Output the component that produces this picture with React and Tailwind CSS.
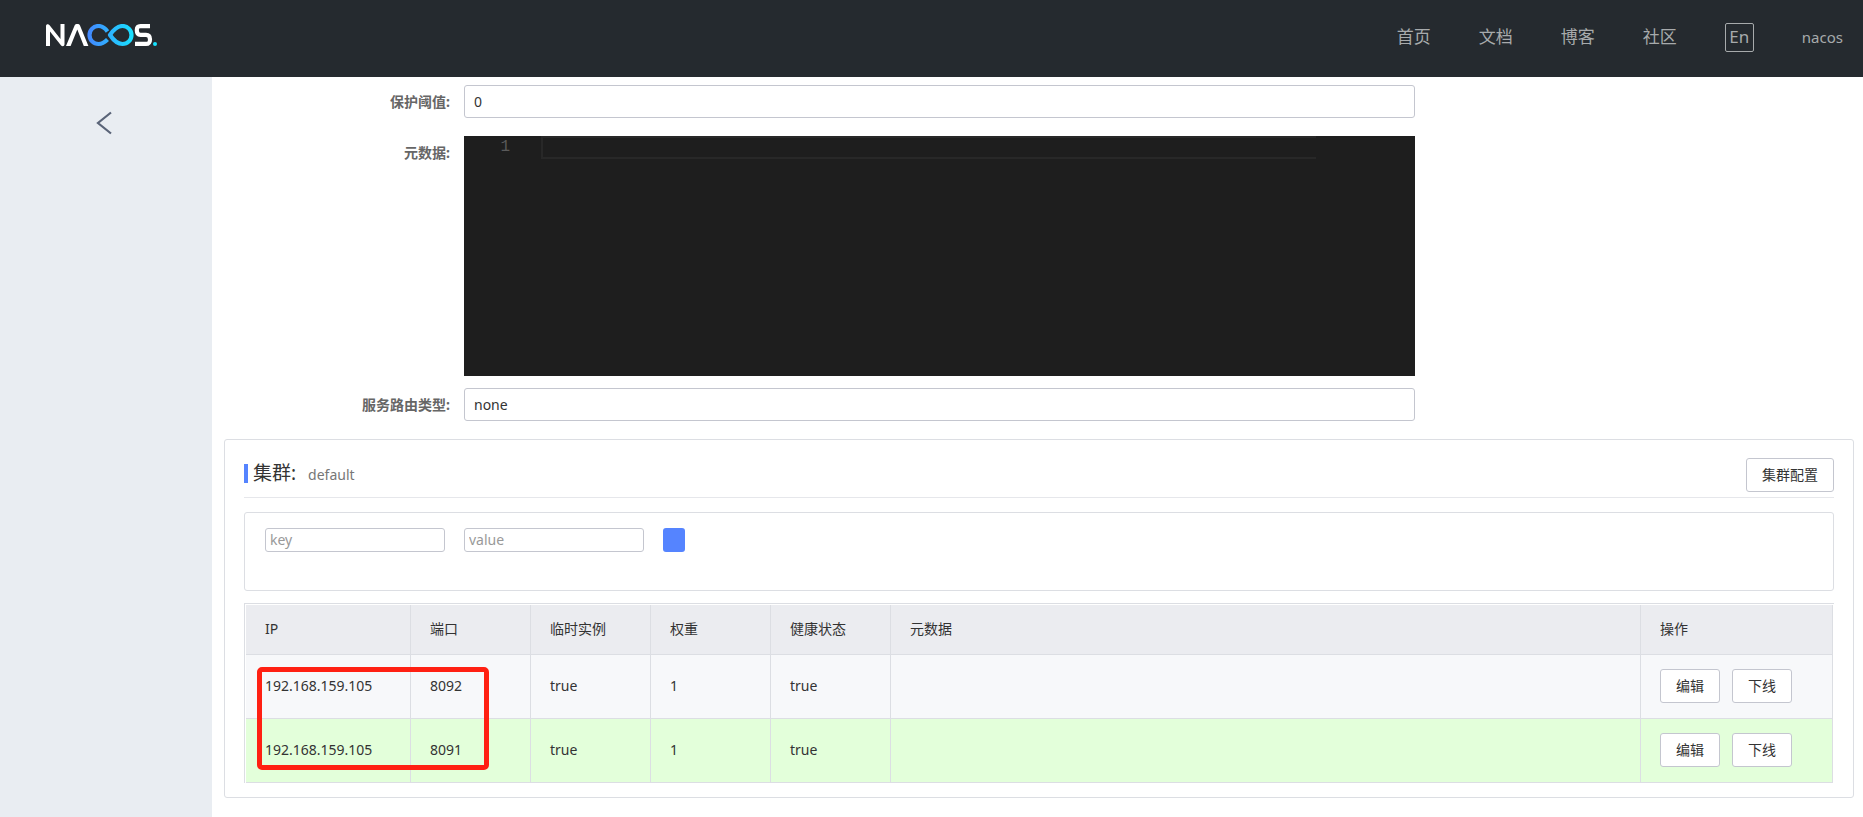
const navLinks = ['首页', '文档', '博客', '社区']

const instances = [
  { ip: '192.168.159.105', port: 8092, ephemeral: 'true', weight: 1, healthy: 'true', row: 'bg-[#f7f8fa]' },
  { ip: '192.168.159.105', port: 8091, ephemeral: 'true', weight: 1, healthy: 'true', row: 'bg-[#e3ffda]' },
]

const th = 'h-[50px] border-r border-b border-[#dcdee3] px-[19px] pb-[2px] text-left font-normal'
const td = 'h-16 border-r border-b border-[#dcdee3] px-[19px] pb-[2px]'

function Logo() {
  return (
    <svg width="112" height="24" viewBox="0 0 112 24" fill="none" role="img" aria-label="Nacos">
      <defs>
        <linearGradient id="loop" x1="41" y1="0" x2="88" y2="0" gradientUnits="userSpaceOnUse">
          <stop offset="0" stopColor="#4485ff" />
          <stop offset="1" stopColor="#17e3ff" />
        </linearGradient>
      </defs>
      <path d="M0 22V2.200C0 0 2.300 -0.400 3.600 1.200L14.500 15V0H18.500V20.200C18.500 22.400 16.200 22.800 14.900 21.200L4 7.500V22Z" fill="#fff" />
      <path d="M20 22L28.600 1.500C29.400 -0.400 33.200 -0.400 34 1.500L42.400 22H37.800L31.300 5.500L24.600 22Z" fill="#fff" />
      <path
        d="M61.500 7.500C59 4 56.500 2 52.500 2A9 9 0 0 0 52.500 20C56.500 20 59 18 61.500 15.500"
        stroke="url(#loop)"
        strokeWidth="4.2"
      />
      <path
        d="M64 11C68 5 71.500 2 76.500 2A9 9 0 0 1 76.500 20C71.500 20 68 17 64 11Z"
        stroke="url(#loop)"
        strokeWidth="4.2"
        strokeLinejoin="round"
      />
      <path
        d="M104 2.100H94.500C91.500 2.100 90.800 3.500 90.800 6.200C90.800 9.500 92 10.800 94.500 10.800H100C103 10.800 104 12.300 104 15.200C104 18.500 103 19.900 100 19.900H89"
        stroke="#fff"
        strokeWidth="4.2"
      />
      <circle cx="109" cy="20" r="2" fill="#17e3ff" />
    </svg>
  )
}

function FormItem({ label, htmlFor, children }) {
  return (
    <div className="flex items-start">
      <label htmlFor={htmlFor} className="w-60 shrink-0 pr-[14px] text-right text-sm leading-[33px] font-bold text-[#666]">
        {label}
      </label>
      <div className="w-7/12">{children}</div>
    </div>
  )
}

function Button({ children }) {
  return (
    <button type="button" className="h-[34px] rounded-[3px] border border-[#c4c6cf] bg-white px-[15px] text-sm text-[#333]">
      {children}
    </button>
  )
}

export default function App() {
  return (
    <div className="flex min-h-screen flex-col bg-white font-['Noto_Sans','Noto_Sans_CJK_SC',sans-serif] text-sm text-[#333]">
      <header className="flex h-[77px] items-center justify-between bg-[#252a2f] pr-5 pb-[2px] pl-[46px]">
        <a href="#home" className="-mt-1">
          <Logo />
        </a>
        <nav className="flex items-center gap-12 text-[17px] text-[#a7aaac]">
          {navLinks.map((text) => (
            <a key={text} href="#nav">{text}</a>
          ))}
          <button type="button" className="flex size-[29px] items-center justify-center rounded-xs border border-[#a7aaac] pb-[2px] leading-none">En</button>
          <a href="#user" className="text-[15px]">nacos</a>
        </nav>
      </header>

      <div className="flex flex-1">
        <aside className="w-[212px] shrink-0 bg-[#e9edf2] pt-[34px]">
          <button type="button" aria-label="返回" className="ml-24 block">
            <svg width="17" height="24" viewBox="0 0 17 24" fill="none" stroke="#5a6478" strokeWidth="2.2">
              <path d="M15 1.500L2 12L15 22.500" />
            </svg>
          </button>
        </aside>

        <main className="min-w-0 flex-1 pt-2 pr-[9px] pl-3">
          <form>
            <FormItem label="保护阈值:" htmlFor="threshold">
              <input id="threshold" defaultValue="0" className="block h-[33px] w-full rounded-[3px] border border-[#c4c6cf] px-[9px]" />
            </FormItem>
            <div className="mt-[18px]">
              <FormItem label="元数据:" htmlFor="metadata">
                <div className="flex h-60 bg-[#1e1e1e] pr-[99px]">
                  <span className="w-[77px] shrink-0 pr-[31px] text-right font-['Liberation_Mono',monospace] text-base leading-[23px] text-[#5a5a5a]">1</span>
                  <textarea
                    id="metadata"
                    className="h-[23px] flex-1 resize-none border-2 border-r-0 border-[#282828] text-[#d4d4d4] outline-none"
                  />
                </div>
              </FormItem>
            </div>
            <div className="mt-3">
              <FormItem label="服务路由类型:" htmlFor="selector">
                <input id="selector" defaultValue="none" className="block h-[33px] w-full rounded-[3px] border border-[#c4c6cf] px-[9px]" />
              </FormItem>
            </div>
          </form>

          <section className="mt-[18px] rounded-[3px] border border-[#dcdee3] px-[19px] pt-[18px] pb-[14px]">
            <div className="flex items-start justify-between border-b border-[#e6e7eb] pb-[5px]">
              <h2 className="mt-[6px] flex h-[19px] items-center text-[19px] leading-[19px]">
                <span className="mr-[5px] h-[19px] w-1 bg-[#5584ff]" />
                集群:
                <span className="ml-3 pt-[2px] text-sm leading-[19px] text-[#777]">default</span>
              </h2>
              <Button>集群配置</Button>
            </div>

            <div className="mt-[14px] flex h-[79px] items-start rounded-[3px] border border-[#dcdee3] px-5 pt-[15px]">
              <input aria-label="key" placeholder="key" className="h-6 w-[180px] rounded-[3px] border border-[#c4c6cf] px-1 pb-[2px] placeholder:text-[#999]" />
              <input aria-label="value" placeholder="value" className="ml-[19px] h-6 w-[180px] rounded-[3px] border border-[#c4c6cf] px-1 pb-[2px] placeholder:text-[#999]" />
              <button type="button" aria-label="添加" className="ml-[19px] h-6 w-[22px] rounded-[3px] bg-[#5584ff]" />
            </div>

            <div className="relative mt-3 border-t border-l border-[#dcdee3] px-px pt-px">
              <table className="w-full table-fixed border-separate border-spacing-0">
                <colgroup>
                  <col className="w-[165px]" />
                  <col className="w-[120px]" />
                  <col className="w-[120px]" />
                  <col className="w-[120px]" />
                  <col className="w-[120px]" />
                  <col />
                  <col className="w-48" />
                </colgroup>
                <thead className="bg-[#ebecf0]">
                  <tr>
                    <th className={th}>IP</th>
                    <th className={th}>端口</th>
                    <th className={th}>临时实例</th>
                    <th className={th}>权重</th>
                    <th className={th}>健康状态</th>
                    <th className={th}>元数据</th>
                    <th className={th}>操作</th>
                  </tr>
                </thead>
                <tbody>
                  {instances.map((item) => (
                    <tr key={item.port} className={item.row}>
                      <td className={td}>{item.ip}</td>
                      <td className={td}>{item.port}</td>
                      <td className={td}>{item.ephemeral}</td>
                      <td className={td}>{item.weight}</td>
                      <td className={td}>{item.healthy}</td>
                      <td className={td} />
                      <td className={td}>
                        <div className="flex gap-3">
                          <Button>编辑</Button>
                          <Button>下线</Button>
                        </div>
                      </td>
                    </tr>
                  ))}
                </tbody>
              </table>
              {/* highlight around the two registered instances */}
              <div className="pointer-events-none absolute top-[63px] left-3 h-[103px] w-[232px] rounded-[5px] border-5 border-[#ff2012]" />
            </div>
          </section>
        </main>
      </div>
    </div>
  )
}
